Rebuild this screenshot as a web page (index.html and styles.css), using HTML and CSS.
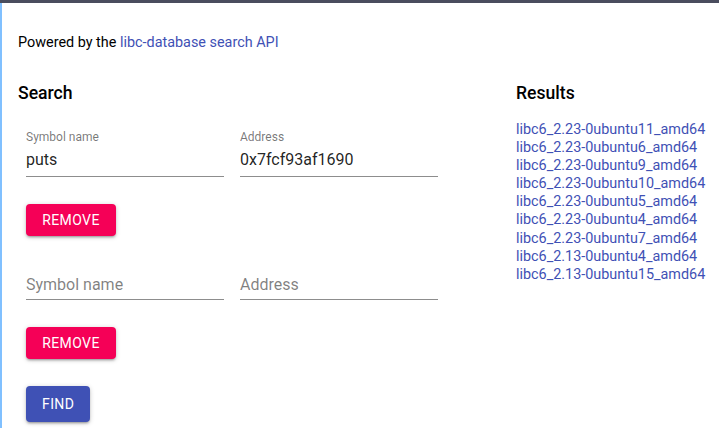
FILE: index.html
```html
<!DOCTYPE html>
<html>
<head>
<meta charset="utf-8">
<link rel="stylesheet" href="styles.css">
</head>
<body>
<div class="topbar"></div>
<div class="page">
  <p class="powered">Powered by the <a href="#">libc-database search API</a></p>
  <div class="layout">
    <section class="search">
      <h2 class="heading">Search</h2>
      <div class="row row-first">
        <label class="field">
          <span class="label">Symbol name</span>
          <span class="value">puts</span>
        </label>
        <label class="field">
          <span class="label">Address</span>
          <span class="value">0x7fcf93af1690</span>
        </label>
      </div>
      <div class="actions"><button class="btn btn-pink">Remove</button></div>
      <div class="row row-next">
        <label class="field">
          <span class="label"></span>
          <span class="value placeholder">Symbol name</span>
        </label>
        <label class="field">
          <span class="label"></span>
          <span class="value placeholder">Address</span>
        </label>
      </div>
      <div class="actions actions-after-row"><button class="btn btn-pink">Remove</button></div>
      <div class="actions actions-find"><button class="btn btn-blue">Find</button></div>
    </section>
    <section class="results">
      <h2 class="heading">Results</h2>
      <ul class="list">
        <li><a href="#">libc6_2.23-0ubuntu11_amd64</a></li>
        <li><a href="#">libc6_2.23-0ubuntu6_amd64</a></li>
        <li><a href="#">libc6_2.23-0ubuntu9_amd64</a></li>
        <li><a href="#">libc6_2.23-0ubuntu10_amd64</a></li>
        <li><a href="#">libc6_2.23-0ubuntu5_amd64</a></li>
        <li><a href="#">libc6_2.23-0ubuntu4_amd64</a></li>
        <li><a href="#">libc6_2.23-0ubuntu7_amd64</a></li>
        <li><a href="#">libc6_2.13-0ubuntu4_amd64</a></li>
        <li><a href="#">libc6_2.13-0ubuntu15_amd64</a></li>
      </ul>
    </section>
  </div>
</div>
</body>
</html>
```

FILE: styles.css
```css
html, body {
  margin: 0;
  padding: 0;
  background: #fff;
  height: 100%;
  overflow: hidden;
}
body {
  font-family: Roboto, "Liberation Sans", sans-serif;
  color: rgba(0, 0, 0, 0.87);
  display: flex;
  flex-direction: column;
}
.topbar {
  height: 3px;
  background: #4a4d5e;
  flex: none;
}
.page {
  flex: 1;
  border-left: 2px solid #80c0ff;
  padding: 0 16px;
}
a {
  color: #3f51b5;
  text-decoration: none;
}
.powered {
  margin: 0;
  padding-top: 30px;
  font-size: 14.4px;
  line-height: 20px;
  color: #000;
}
.layout {
  display: grid;
  grid-template-columns: 498px 1fr;
  margin-top: 28px;
}
.heading {
  margin: 0;
  font-size: 17.6px;
  font-weight: 500;
  line-height: 24px;
  color: #000;
}
.row {
  display: flex;
  gap: 16px;
  padding: 0 8px;
}
.row-first {
  margin-top: 25px;
}
.row-next {
  margin-top: 17px;
}
.field {
  width: 198px;
  display: flex;
  flex-direction: column;
  border-bottom: 1px solid #8d8d8d;
}
.label {
  font-size: 12px;
  line-height: 14px;
  height: 14px;
  color: rgba(0, 0, 0, 0.54);
}
.value {
  font-size: 16px;
  line-height: 19px;
  padding: 6px 0 7px;
}
.placeholder {
  color: rgba(0, 0, 0, 0.5);
  padding: 8px 0 5px;
}
.actions {
  padding: 0 8px;
  margin-top: 27px;
}
.actions-after-row {
  margin-top: 27px;
}
.actions-find {
  margin-top: 27px;
}
.btn {
  font-family: Roboto, "Liberation Sans", sans-serif;
  font-size: 14px;
  font-weight: 400;
  text-transform: uppercase;
  letter-spacing: 0.4px;
  color: #fff;
  border: 0;
  border-radius: 4px;
  height: 32px;
  padding: 0 16px;
  box-shadow: 0 1px 5px 0 rgba(0,0,0,0.2), 0 2px 2px 0 rgba(0,0,0,0.14), 0 3px 1px -2px rgba(0,0,0,0.12);
}
.btn-pink {
  background: #f50057;
  min-width: 90px;
}
.btn-blue {
  background: #3f51b5;
  min-width: 64px;
  height: 36px;
}
.results {
  min-width: 0;
}
.results .heading {
  margin-bottom: 16px;
}
.list {
  list-style: none;
  margin: 0;
  padding: 0;
}
.list li {
  font-size: 14.4px;
  line-height: 18.1px;
  white-space: nowrap;
}
```
